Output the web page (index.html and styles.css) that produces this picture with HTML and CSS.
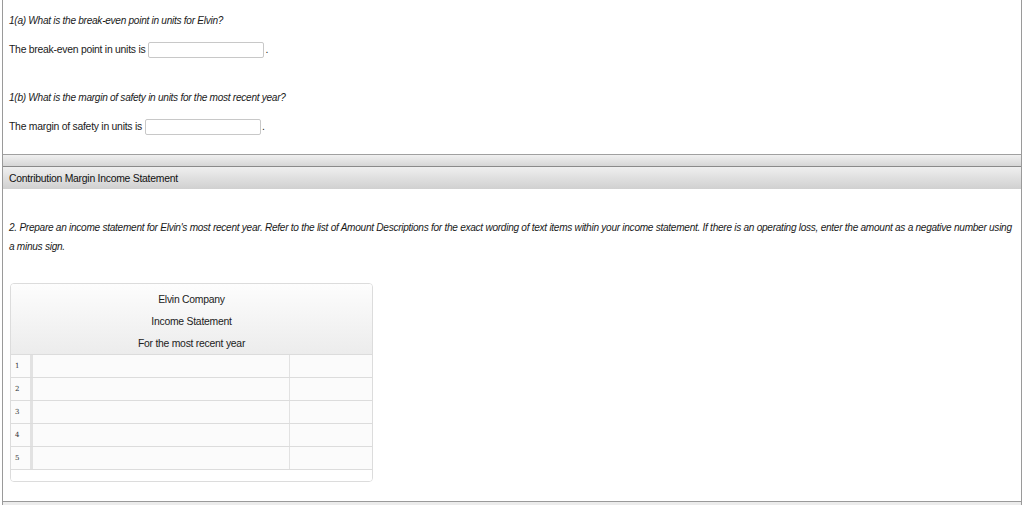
FILE: index.html
```html
<!DOCTYPE html>
<html>
<head>
<meta charset="utf-8">
<link rel="stylesheet" href="styles.css">
</head>
<body>
<div class="page">
  <div class="part">
    <p class="q"><i>1(a) What is the break-even point in units for Elvin?</i></p>
    <p class="ans">The break-even point in units is <span class="inp w1"></span>.</p>
    <p class="q q2"><i>1(b) What is the margin of safety in units for the most recent year?</i></p>
    <p class="ans">The margin of safety in units is <span class="inp w1"></span>.</p>
  </div>
  <div class="bar"></div>
  <div class="head">Contribution Margin Income Statement</div>
  <div class="part2">
    <p class="q3"><i>2. Prepare an income statement for Elvin's most recent year. Refer to the list of Amount Descriptions for the exact wording of text items within your income statement. If there is an operating loss, enter the amount as a negative number using a minus sign.</i></p>
    <div class="tbl">
      <div class="thead">
        <div>Elvin Company</div>
        <div>Income Statement</div>
        <div>For the most recent year</div>
      </div>
      <div class="row"><div class="num">1</div><div class="c1"></div><div class="c2"></div></div>
      <div class="row"><div class="num">2</div><div class="c1"></div><div class="c2"></div></div>
      <div class="row"><div class="num">3</div><div class="c1"></div><div class="c2"></div></div>
      <div class="row"><div class="num">4</div><div class="c1"></div><div class="c2"></div></div>
      <div class="row"><div class="num">5</div><div class="c1"></div><div class="c2"></div></div>
      <div class="tfoot"></div>
    </div>
  </div>
  <div class="bottom"></div>
</div>
</body>
</html>
```
FILE: styles.css
```css
html, body { margin: 0; padding: 0; background: #fff; }
body {
  font-family: "Liberation Sans", Arial, Helvetica, sans-serif;
  font-size: 10.4px;
  letter-spacing: -0.25px;
  color: #1a1a1a;
}
i { font-size: 10.1px; letter-spacing: -0.28px; }
.page {
  margin: 0 2px;
  border-left: 1px solid #9a9a9a;
  border-right: 1px solid #9a9a9a;
  height: 505px;
  box-sizing: border-box;
  display: flex;
  flex-direction: column;
}
p { margin: 0; }
.part { padding: 11px 6px 0 6px; height: 154px; box-sizing: border-box; }
.q { line-height: 19px; }
.ans { line-height: 19px; margin-top: 10px; display: flex; align-items: center; }
.q2 { margin-top: 29px; }
.inp {
  display: inline-block;
  width: 114px;
  height: 14px;
  border: 1px solid #c8c8c8;
  border-radius: 2px;
  margin-left: 3px;
  margin-right: 1px;
  background: #fff;
}
.bar {
  height: 11px;
  border-top: 1px solid #a0a0a0;
  border-bottom: 1px solid #8a8a8a;
  background: linear-gradient(#f0f0f0, #d6d6d6);
}
.head {
  height: 22px;
  line-height: 24px;
  padding-left: 6px;
  background: linear-gradient(#efefef, #d0d0d0);
  color: #111;
}
.part2 { padding: 29px 6px 0 6px; flex: 1; }
.q3 { line-height: 19px; }
.tbl {
  margin-top: 27px;
  margin-left: 1px;
  width: 361px;
  border: 1px solid #dcdcdc;
  border-radius: 4px;
  background: #fff;
  overflow: hidden;
}
.thead {
  height: 71px;
  padding-top: 5px;
  box-sizing: border-box;
  background: linear-gradient(#fdfdfd, #ececec);
  border-bottom: 1px solid #dcdcdc;
  text-align: center;
  color: #222;
}
.thead div { line-height: 22px; }
.row {
  display: flex;
  height: 22px;
  border-bottom: 1px solid #dcdcdc;
  background: #fbfbfb;
}
.num {
  width: 22px;
  border-right: 3px solid #e2e2e2;
  box-sizing: border-box;
  font-family: "DejaVu Serif", serif;
  font-size: 7px;
  letter-spacing: 0;
  line-height: 22px;
  padding-left: 4px;
  color: #333;
}
.c1 { width: 256px; border-right: 1px solid #e2e2e2; }
.c2 { flex: 1; }
.tfoot { height: 11px; background: #fff; }
.bottom {
  height: 3px;
  border-top: 1px solid #9a9a9a;
  background: #ececec;
}
```
